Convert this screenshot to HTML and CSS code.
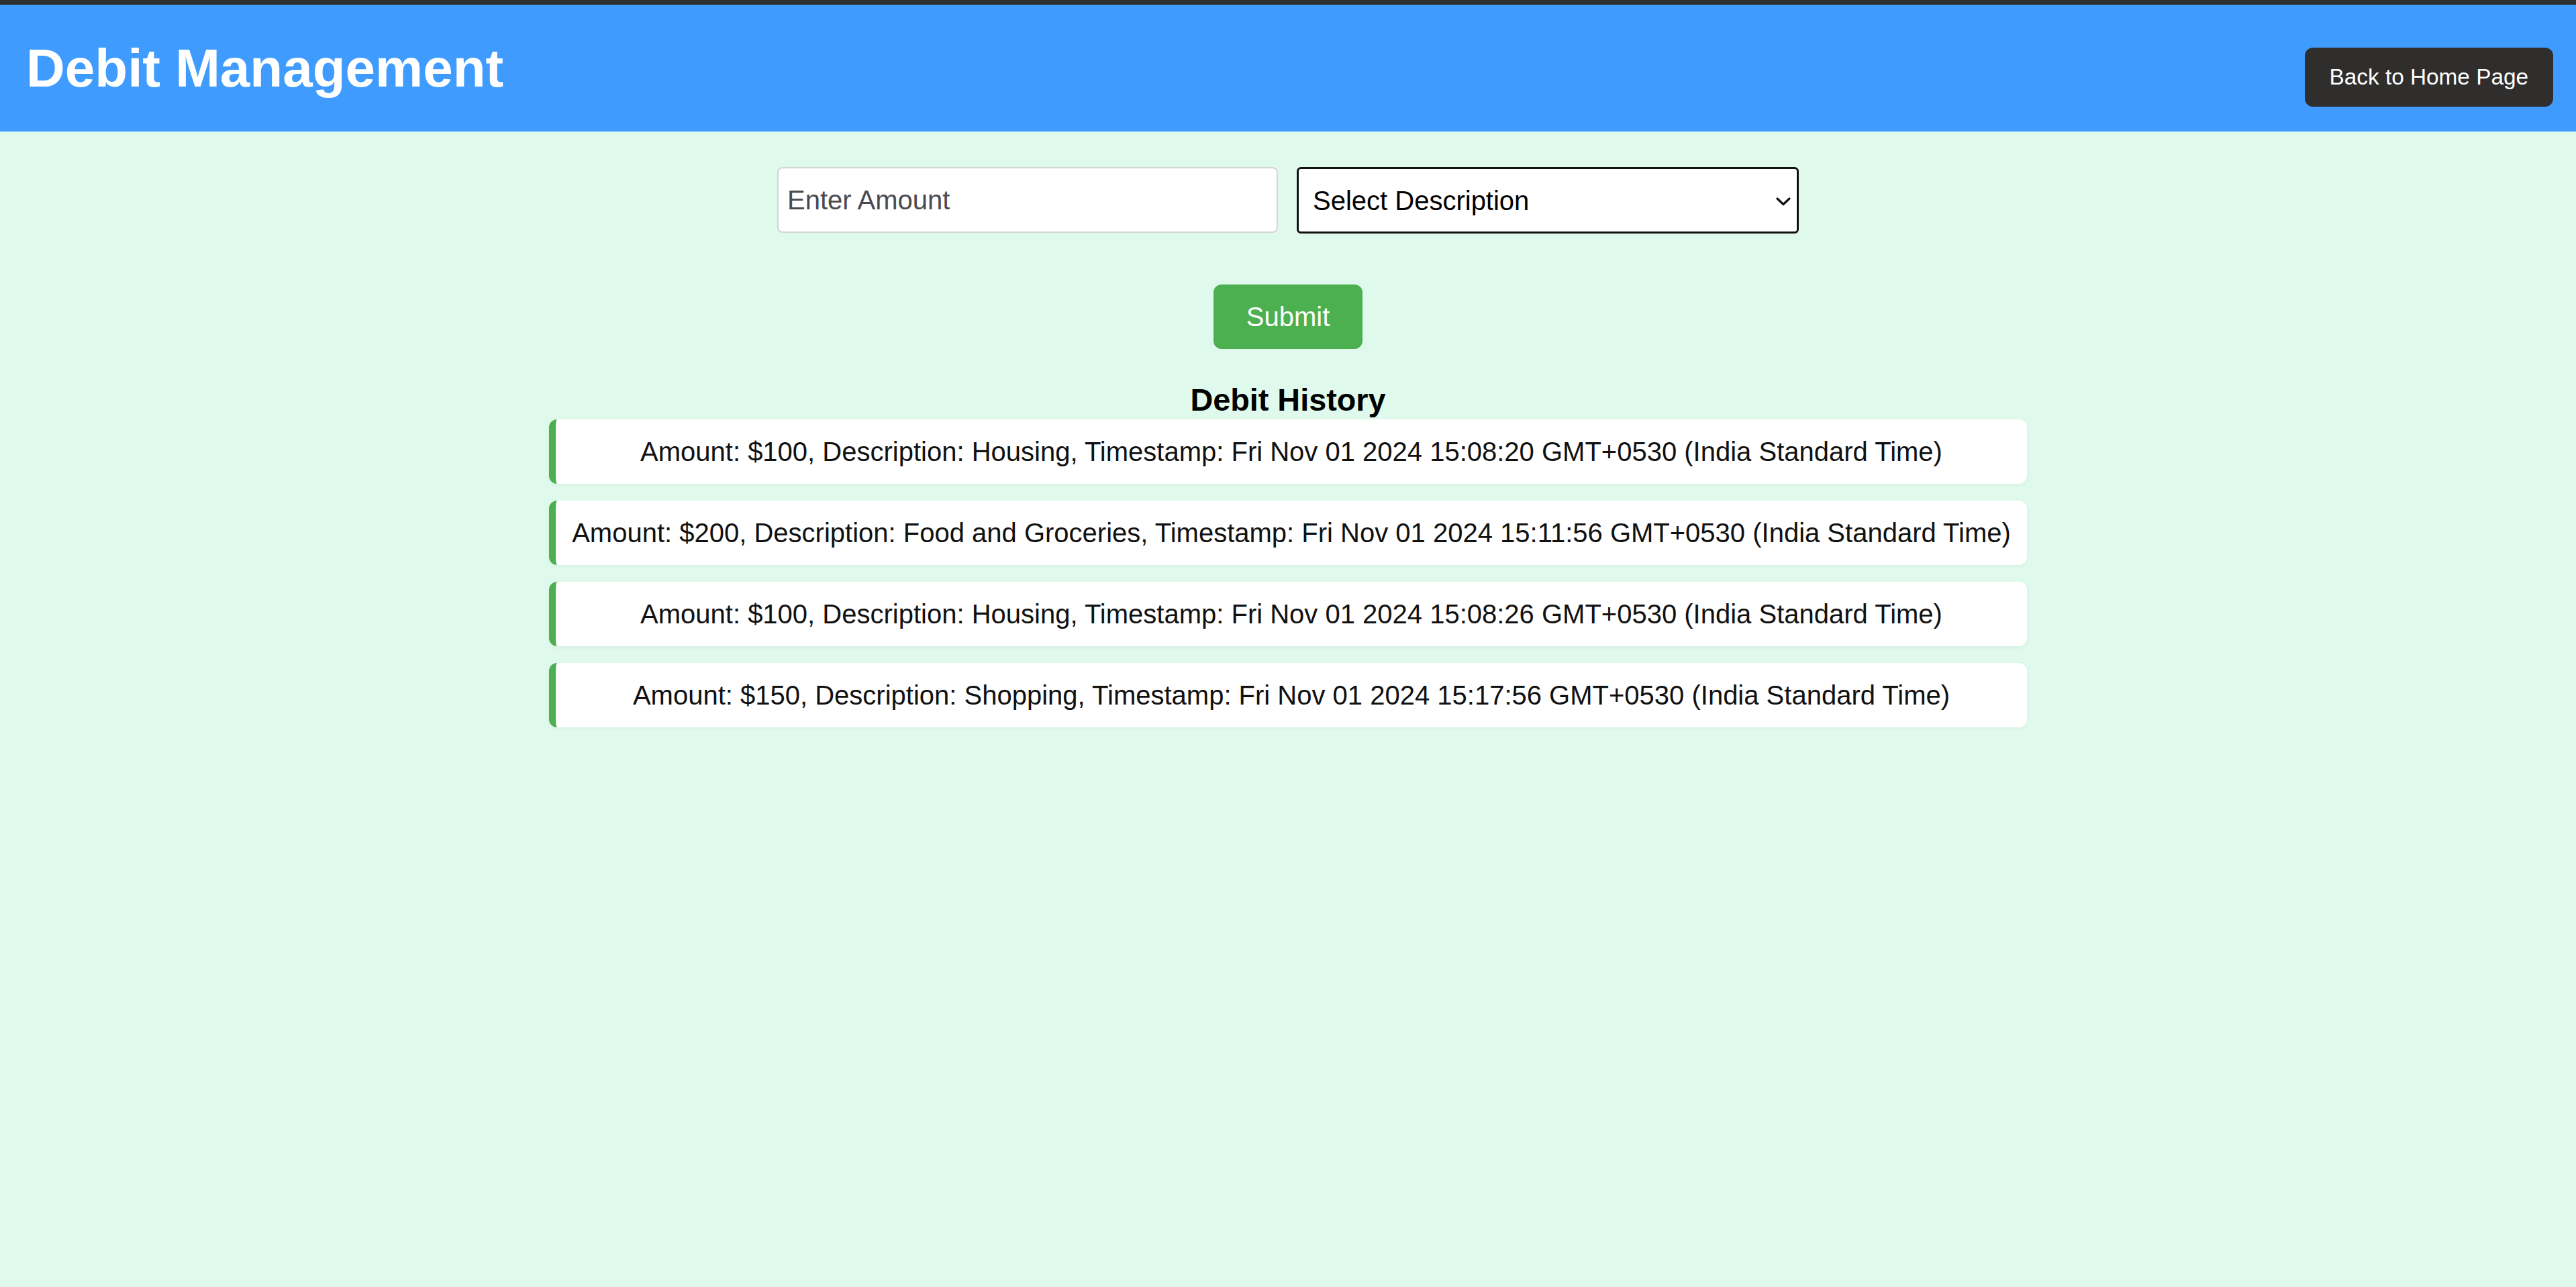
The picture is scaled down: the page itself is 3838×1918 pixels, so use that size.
FILE: index.html
```html
<!DOCTYPE html>
<html lang="en">
<head>
<meta charset="utf-8">
<title>Debit Management</title>
<link rel="stylesheet" href="styles.css">
</head>
<body>
<div class="topbar"></div>
<header class="header">
  <h1 class="title">Debit Management</h1>
  <button class="back-btn" type="button">Back to Home Page</button>
</header>
<main class="main">
  <form class="debit-form">
    <div class="fields">
      <input class="amount" type="text" placeholder="Enter Amount">
      <div class="select-wrap">
        <select class="desc">
          <option>Select Description</option>
          <option>Housing</option>
          <option>Food and Groceries</option>
          <option>Shopping</option>
        </select>
        <svg class="chevron" viewBox="0 0 22 13" width="22" height="13" aria-hidden="true">
          <path d="M2 2 L11 10.5 L20 2" fill="none" stroke="#111" stroke-width="3.2" stroke-linecap="round" stroke-linejoin="round"/>
        </svg>
      </div>
    </div>
    <div class="submit-row">
      <button class="submit" type="button">Submit</button>
    </div>
  </form>
  <h3 class="history-title">Debit History</h3>
  <ul class="history">
    <li class="entry">Amount: $100, Description: Housing, Timestamp: Fri Nov 01 2024 15:08:20 GMT+0530 (India Standard Time)</li>
    <li class="entry">Amount: $200, Description: Food and Groceries, Timestamp: Fri Nov 01 2024 15:11:56 GMT+0530 (India Standard Time)</li>
    <li class="entry">Amount: $100, Description: Housing, Timestamp: Fri Nov 01 2024 15:08:26 GMT+0530 (India Standard Time)</li>
    <li class="entry">Amount: $150, Description: Shopping, Timestamp: Fri Nov 01 2024 15:17:56 GMT+0530 (India Standard Time)</li>
  </ul>
</main>
</body>
</html>
```
FILE: styles.css
```css
html, body {
  margin: 0;
  padding: 0;
}
body {
  background: #dffaec;
  font-family: "Liberation Sans", Arial, sans-serif;
  color: #111;
  min-height: 1918px;
}
.topbar {
  height: 7px;
  background: #2e302d;
}
.header {
  height: 189px;
  box-sizing: border-box;
  display: flex;
  align-items: center;
  justify-content: space-between;
  padding: 0 34px 0 39px;
  background: #3f9cfe;
}
.title {
  margin: 0;
  font-size: 80px;
  font-weight: bold;
  color: #fff;
  line-height: normal;
}
.back-btn {
  margin-top: 26px;
  background: #302e2c;
  color: #fff;
  border: none;
  border-radius: 12px;
  font-family: inherit;
  font-size: 33.33px;
  line-height: normal;
  padding: 25px 37px;
}
.debit-form {
  margin: 53px 0 0;
}
.fields {
  display: flex;
  justify-content: center;
  gap: 28px;
}
.amount {
  width: 746px;
  height: 98px;
  box-sizing: border-box;
  border: 2px solid #d2d6d4;
  border-radius: 8px;
  padding: 0 13px;
  font-family: inherit;
  font-size: 40px;
  color: #111;
  background: #fff;
  outline: none;
}
.amount::placeholder {
  color: #4a4a50;
}
.select-wrap {
  position: relative;
  width: 748px;
  height: 99px;
}
.desc {
  appearance: none;
  -webkit-appearance: none;
  width: 100%;
  height: 100%;
  box-sizing: border-box;
  border: 3px solid #111;
  border-radius: 6px;
  padding: 0 21px;
  font-family: inherit;
  font-size: 40px;
  color: #000;
  background: #fff;
}
.chevron {
  position: absolute;
  right: 12px;
  top: 50%;
  margin-top: -5px;
  pointer-events: none;
}
.submit-row {
  margin-top: 76px;
  text-align: center;
}
.submit {
  background: #4caf50;
  color: #fff;
  border: none;
  border-radius: 12px;
  font-family: inherit;
  font-size: 40px;
  line-height: 46px;
  padding: 25px 49px;
}
.history-title {
  margin: 49px 0 2px;
  font-size: 46.8px;
  font-weight: bold;
  text-align: center;
  line-height: 54px;
  color: #000;
}
.history {
  list-style: none;
  padding: 0;
  margin: 0 auto;
  width: 2202px;
}
.entry {
  background: #fff;
  border-left: 10px solid #4caf50;
  border-radius: 12px;
  padding: 25px 8px;
  font-size: 40px;
  line-height: 46px;
  text-align: center;
  white-space: nowrap;
  margin-bottom: 25px;
  box-shadow: 0 2px 6px rgba(0, 0, 0, 0.04);
  color: #111;
}
```
